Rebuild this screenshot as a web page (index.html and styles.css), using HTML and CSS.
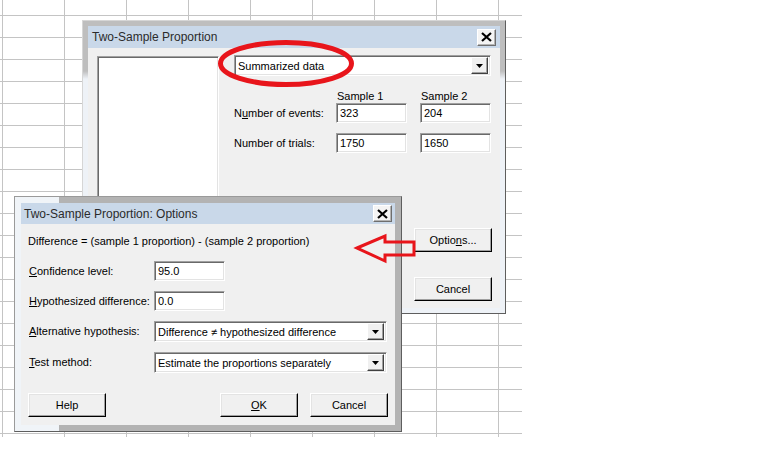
FILE: index.html
```html
<!DOCTYPE html>
<html lang="en">
<head>
    <meta charset="UTF-8">
    <title>Two-Sample Proportion</title>
    <link rel="stylesheet" href="styles.css">
</head>
<body>
    <div class="sheet"></div>

    <div class="win main-win">
        <div class="titlebar">
            <span class="title">Two-Sample Proportion</span>
            <span class="close">
                <svg width="11" height="10" viewBox="0 0 11 10"><path d="M1 1 L10 9 M10 1 L1 9" stroke="#000" stroke-width="2.2" fill="none"/></svg>
            </span>
        </div>
        <div class="client main-client">
            <div class="varlist"></div>
            <div class="pane">
                <div class="combo combo-wide">
                    <span>Summarized data</span>
                    <span class="drop"><svg width="7" height="4" viewBox="0 0 7 4"><path d="M0 0 H7 L3.5 4 Z" fill="#000"/></svg></span>
                </div>
                <div class="data-grid">
                    <span></span>
                    <span class="col-head">Sample 1</span>
                    <span class="col-head">Sample 2</span>
                    <label>N<u>u</u>mber of events:</label>
                    <div class="field">323</div>
                    <div class="field">204</div>
                    <label>Number of trials:</label>
                    <div class="field">1750</div>
                    <div class="field">1650</div>
                </div>
                <div class="side-buttons">
                    <button class="btn">Optio<u>n</u>s...</button>
                    <button class="btn btn-cancel">Cancel</button>
                </div>
            </div>
        </div>
    </div>

    <div class="win opts-win">
        <div class="titlebar">
            <span class="title">Two-Sample Proportion: Options</span>
            <span class="close">
                <svg width="11" height="10" viewBox="0 0 11 10"><path d="M1 1 L10 9 M10 1 L1 9" stroke="#000" stroke-width="2.2" fill="none"/></svg>
            </span>
        </div>
        <div class="client opts-client">
            <div class="diff-text">Difference = (sample 1 proportion) - (sample 2 proportion)</div>
            <div class="opt-grid">
                <label><u>C</u>onfidence level:</label>
                <div class="field">95.0</div>
                <label><u>H</u>ypothesized difference:</label>
                <div class="field">0.0</div>
                <label><u>A</u>lternative hypothesis:</label>
                <div class="combo combo-opt">
                    <span>Difference ≠ hypothesized difference</span>
                    <span class="drop"><svg width="7" height="4" viewBox="0 0 7 4"><path d="M0 0 H7 L3.5 4 Z" fill="#000"/></svg></span>
                </div>
                <label><u>T</u>est method:</label>
                <div class="combo combo-opt">
                    <span>Estimate the proportions separately</span>
                    <span class="drop"><svg width="7" height="4" viewBox="0 0 7 4"><path d="M0 0 H7 L3.5 4 Z" fill="#000"/></svg></span>
                </div>
            </div>
            <div class="opt-buttons">
                <button class="btn">Help</button>
                <div class="btn-group">
                    <button class="btn"><u>O</u>K</button>
                    <button class="btn">Cancel</button>
                </div>
            </div>
        </div>
    </div>

    <!-- red marks drawn over the screenshot -->
    <svg class="marks" width="768" height="460" viewBox="0 0 768 460">
        <ellipse cx="286" cy="63.5" rx="65.5" ry="21" fill="none" stroke="#e8151b" stroke-width="5"/>
        <polygon points="357,248 385,236 385,242 414,242 414,255 385,255 385,261" fill="none" stroke="#e8151b" stroke-width="3"/>
    </svg>
</body>
</html>
```

FILE: styles.css
```css
* {
    box-sizing: border-box;
}

body {
    margin: 0;
    width: 768px;
    height: 460px;
    position: relative;
    overflow: hidden;
    background: #fff;
    font-family: "Liberation Sans", Arial, sans-serif;
    font-size: 11px;
    color: #000;
}

u {
    text-decoration: underline;
    text-underline-offset: 1px;
}

/* spreadsheet behind the dialogs */
.sheet {
    position: absolute;
    left: 0;
    top: 0;
    width: 522px;
    height: 437px;
    background-image:
        linear-gradient(to right, #c4c4c4 1px, transparent 1px),
        linear-gradient(to bottom, #c4c4c4 1px, transparent 1px);
    background-size: 62px 22px;
    background-position: 2px 0, 0 15px;
}

/* window frames */
.win {
    position: absolute;
    border: 1px solid;
    padding: 6px;
}

.main-win {
    left: 82px;
    top: 20px;
    width: 424px;
    height: 294px;
    padding: 5px;
    border-color: #d6d6d6 #5e5e5e #5e5e5e #d6d6d6;
    background: linear-gradient(to bottom, #bebebe 50px, #eef2f7 58px);
}

.opts-win {
    left: 14px;
    top: 196px;
    width: 388px;
    height: 236px;
    border-color: #9a9a9a #5e5e5e #5e5e5e #9a9a9a;
    background: linear-gradient(to right, #f0f4f8 44px, #b3b3b3 44px);
}

.titlebar {
    display: flex;
    align-items: center;
    justify-content: space-between;
    background: #c9d8e9;
    color: #2b2b2b;
    font-size: 12px;
}

.main-win .titlebar {
    height: 22px;
    padding: 0 4px 0 4px;
}

.opts-win .titlebar {
    height: 21px;
    padding: 0 3px 0 3px;
}

.close {
    width: 19px;
    height: 17px;
    display: flex;
    align-items: center;
    justify-content: center;
    background: #f4f4f4;
    border: 1px solid;
    border-color: #fff #6e6e6e #6e6e6e #fff;
    box-shadow: inset -1px -1px 0 #b4b4b4;
}

.client {
    background: #f0f0f0;
}

/* main dialog */
.main-client {
    height: 260px;
    display: flex;
    align-items: flex-start;
}

.varlist {
    width: 122px;
    height: 244px;
    margin: 8px 0 0 9px;
    background: #fff;
    border: 1px solid;
    border-color: #a0a0a0 #fff #fff #a0a0a0;
    box-shadow: inset 1px 1px 0 #696969, inset -1px -1px 0 #e3e3e3;
}

.pane {
    width: 258px;
    margin: 7px 0 0 15px;
}

.field,
.combo {
    height: 20px;
    background: #fff;
    border: 1px solid;
    border-color: #a0a0a0 #fff #fff #a0a0a0;
    box-shadow: inset 1px 1px 0 #696969, inset -1px -1px 0 #e3e3e3;
    padding-left: 3px;
    line-height: 18px;
}

.field {
    width: 71px;
}

.combo {
    display: flex;
    align-items: center;
    padding-right: 2px;
    height: 21px;
}

.combo-wide {
    width: 257px;
}

.combo-opt {
    width: 233px;
}

.drop {
    margin-left: auto;
    width: 17px;
    height: 17px;
    display: flex;
    align-items: center;
    justify-content: center;
    background: #f0f0f0;
    border: 1px solid;
    border-color: #fff #404040 #404040 #fff;
    box-shadow: inset -1px -1px 0 #a0a0a0;
}

.data-grid {
    display: grid;
    grid-template-columns: 89px 71px 71px;
    grid-template-rows: 18px 30px 20px;
    column-gap: 13px;
    margin-top: 9px;
}

.col-head {
    align-self: end;
    line-height: 14px;
    padding-left: 1px;
}

.data-grid label,
.opt-grid label {
    line-height: 20px;
    height: 20px;
    white-space: nowrap;
}

.side-buttons {
    display: flex;
    flex-direction: column;
    align-items: flex-end;
    gap: 25px;
    margin-top: 75px;
}

.btn {
    width: 78px;
    height: 24px;
    padding: 0;
    font-family: inherit;
    font-size: 11px;
    color: #000;
    background: #f0f0f0;
    border: 1px solid;
    border-color: #fff #000 #000 #fff;
    box-shadow: inset -1px -1px 0 #a0a0a0, inset 1px 1px 0 #e3e3e3;
}

/* options dialog */
.opts-client {
    height: 201px;
    padding: 10px 7px 0 7px;
}

.diff-text {
    line-height: 14px;
}

.opt-grid {
    display: grid;
    grid-template-columns: 126px auto;
    row-gap: 10px;
    margin-top: 13px;
    align-items: start;
}

.opt-grid label {
    padding-left: 1px;
}

.opt-buttons {
    display: flex;
    justify-content: space-between;
    margin-top: 20px;
}

.btn-group {
    display: flex;
    gap: 12px;
}

.marks {
    position: absolute;
    left: 0;
    top: 0;
    pointer-events: none;
}
```
